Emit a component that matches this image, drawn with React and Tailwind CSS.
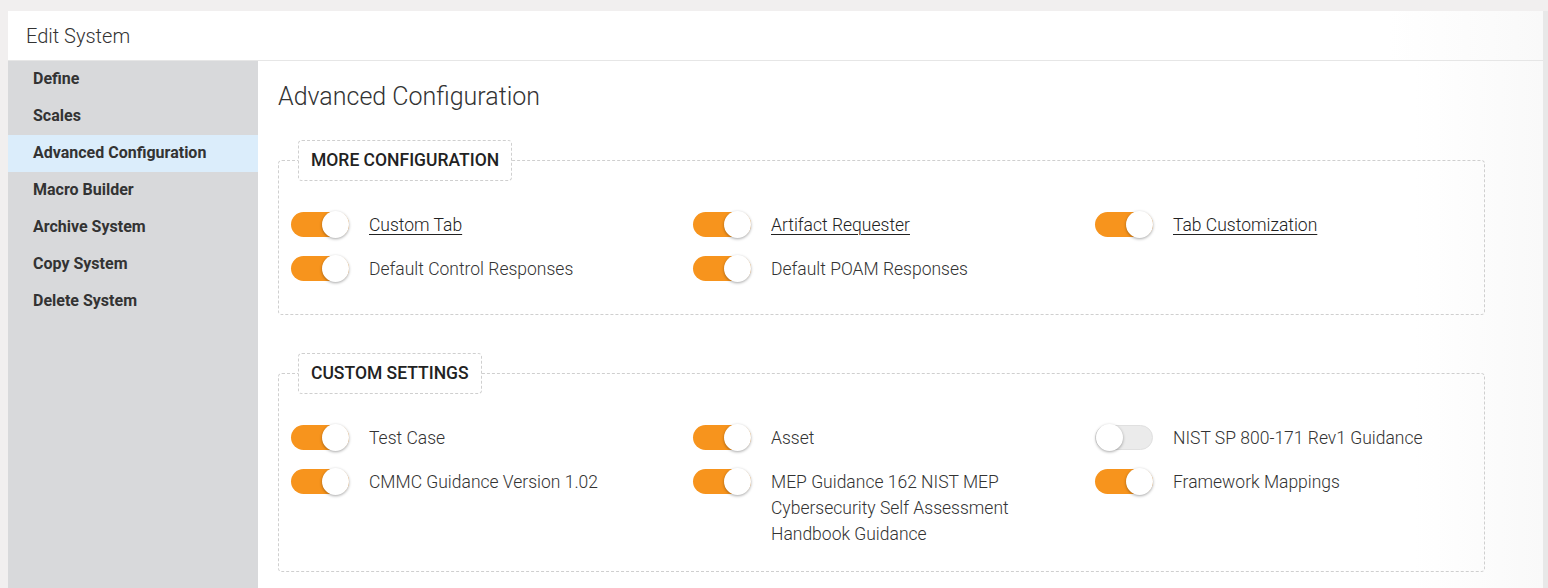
import React, { useState } from "react";

const navItems = [
  "Define",
  "Scales",
  "Advanced Configuration",
  "Macro Builder",
  "Archive System",
  "Copy System",
  "Delete System",
];

const moreConfig = [
  { label: "Custom Tab", on: true, link: true },
  { label: "Artifact Requester", on: true, link: true },
  { label: "Tab Customization", on: true, link: true },
  { label: "Default Control Responses", on: true },
  { label: "Default POAM Responses", on: true },
];

const customSettings = [
  { label: "Test Case", on: true },
  { label: "Asset", on: true },
  { label: "NIST SP 800-171 Rev1 Guidance", on: false },
  { label: "CMMC Guidance Version 1.02", on: true },
  { label: "MEP Guidance 162 NIST MEP Cybersecurity Self Assessment Handbook Guidance", on: true },
  { label: "Framework Mappings", on: true },
];

function Toggle({ on, onClick }) {
  return (
    <button
      type="button"
      onClick={onClick}
      className={
        "relative flex h-[25px] w-[58px] shrink-0 items-center rounded-full " +
        (on ? "bg-[#f7941d] justify-end" : "bg-[#ebebeb] border border-[#e0e0e0] justify-start")
      }
    >
      <span className="h-[27px] w-[27px] rounded-full bg-white shadow-[0_1px_3px_rgba(0,0,0,0.35)]" />
    </button>
  );
}

function Setting({ item }) {
  const [on, setOn] = useState(item.on);
  return (
    <div className="flex items-start gap-[20px]">
      <Toggle on={on} onClick={() => setOn(!on)} />
      <span
        className={
          "w-[250px] text-[17.5px] leading-[26px] font-light " +
          (item.link ? "text-[#222] underline underline-offset-[3px] decoration-1" : "text-[#333]")
        }
      >
        {item.label}
      </span>
    </div>
  );
}

function Section({ title, items, pb }) {
  return (
    <fieldset className={"w-[1207px] rounded border border-dashed border-[#cfcfcf] px-3 " + pb}>
      <legend className="ml-[7px] flex h-[41px] items-center rounded border border-dashed border-[#cfcfcf] bg-white px-3 text-[17.5px] font-medium uppercase text-[#222]">
        {title}
      </legend>
      <div className="mt-[31px] grid grid-cols-[402px_402px_1fr] gap-y-[18px]">
        {items.map((item) => (
          <Setting key={item.label} item={item} />
        ))}
      </div>
    </fieldset>
  );
}

export default function App() {
  const active = "Advanced Configuration";
  return (
    <div
      className="flex h-screen overflow-hidden bg-[#f1efef] pl-[8px] pt-[11px]"
      style={{ fontFamily: "Roboto, 'Liberation Sans', sans-serif" }}
    >
      <div className="flex flex-1 flex-col bg-white">
        <div className="flex h-[50px] items-center border-b border-[#e6e6e6] bg-gradient-to-r from-white from-90% to-[#f9f9f9] pl-[18px] text-[20px] font-light text-[#333]">
          Edit System
        </div>
        <div className="flex flex-1">
          <nav className="w-[250px] bg-[#d8d9db]">
            {navItems.map((n) => (
              <div
                key={n}
                className={
                  "flex h-[37px] items-center pb-[1px] pl-[25px] text-[16px] font-bold text-[#333] " +
                  (n === active ? "bg-[#dbedfb]" : "")
                }
              >
                {n}
              </div>
            ))}
          </nav>
          <main className="flex-1 bg-gradient-to-r from-white from-90% to-[#f9f9f9] pl-[20px] pt-[20px]">
            <h1 className="text-[25px] font-light leading-[32px] text-[#333]">Advanced Configuration</h1>
            <div className="mt-[27px] flex flex-col gap-[38px]">
              <Section title="More Configuration" items={moreConfig} pb="pb-[32px]" />
              <Section title="Custom Settings" items={customSettings} pb="pb-[24px]" />
            </div>
          </main>
        </div>
      </div>
      <div className="w-[5px] bg-[#e8e8e8]" />
    </div>
  );
}
